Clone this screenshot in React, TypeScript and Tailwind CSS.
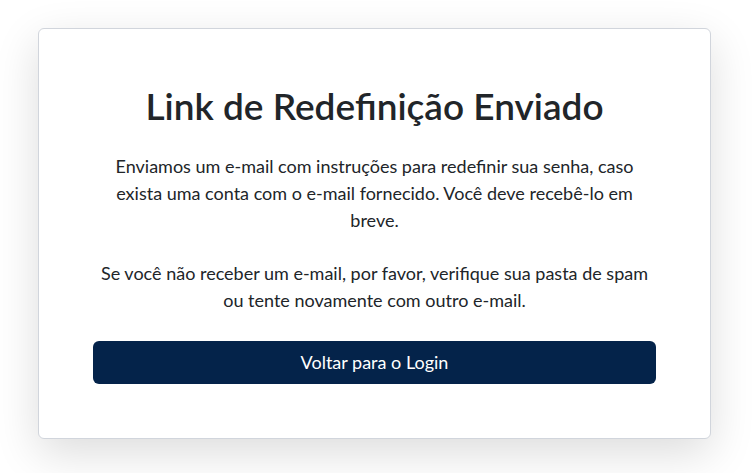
export default function App() {
  return (
    <div className="min-h-screen bg-white pt-[28px] pl-[38px] pr-[44px] font-['Lato',sans-serif]">
      <div className="rounded-md border border-gray-300 bg-white px-[54px] pt-[54px] pb-[54px] shadow-[0_14px_45px_rgba(0,0,0,0.14)]">
        <h2 className="text-center text-[37px] font-semibold leading-tight text-[#212529]">
          Link de Redefinição Enviado
        </h2>
        <p className="mt-[24px] text-center text-[18px] leading-[27px] text-[#212529]">
          Enviamos um e-mail com instruções para redefinir sua senha, caso exista uma conta com o e-mail fornecido. Você deve recebê-lo em breve.
        </p>
        <p className="mt-[26px] text-center text-[18px] leading-[27px] text-[#212529]">
          Se você não receber um e-mail, por favor, verifique sua pasta de spam ou tente novamente com outro e-mail.
        </p>
        <button className="mt-[27px] flex h-[43px] w-full items-center justify-center rounded-md bg-[#04234a] text-[18px] text-white">
          Voltar para o Login
        </button>
      </div>
    </div>
  );
}
